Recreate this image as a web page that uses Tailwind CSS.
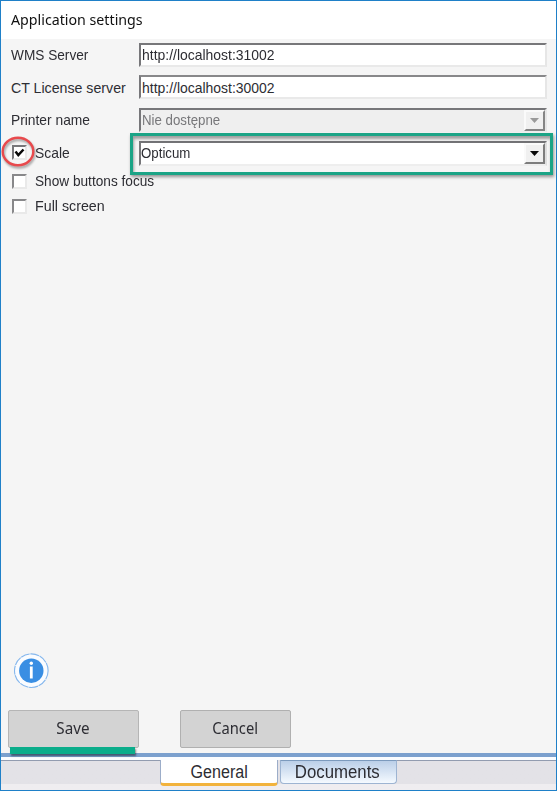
<!DOCTYPE html>
<html lang="en">
<head>
<meta charset="utf-8">
<title>Application settings</title>
<script src="https://cdn.jsdelivr.net/npm/@tailwindcss/browser@4"></script>
</head>
<body class="h-[791px] w-[557px] overflow-hidden font-['Liberation_Sans',Arial,sans-serif] text-[15px] text-[#2d2d33]">
<div class="relative flex h-full w-full flex-col border border-[#1f80c8] bg-[#f5f5f5]">
  <header class="flex h-[38px] shrink-0 items-center bg-white pl-[10px] font-['Noto_Sans','Open_Sans',sans-serif] text-[14.5px] text-[#111]"><span class="inline-block origin-left scale-x-[.98]">Application settings</span></header>

  <main class="flex grow flex-col">
    <div class="mt-[4px] flex h-[24px] items-center pl-[10px]">
      <label class="w-[128px] whitespace-nowrap"><span class="inline-block origin-left scale-x-[.91]">WMS Server</span></label>
      <div class="flex h-[24px] w-[408px] items-center border-2 border-t-[#77777a] border-l-[#77777a] border-r-[#e6e6e6] border-b-[#e9e9e9] bg-white pl-px"><span class="inline-block origin-left scale-x-[.93]">http://localhost:31002</span></div>
    </div>
    <div class="mt-[8px] flex h-[24px] items-center pl-[10px]">
      <label class="w-[128px] whitespace-nowrap"><span class="inline-block origin-left scale-x-[.945] translate-y-px">CT License server</span></label>
      <div class="flex h-[24px] w-[408px] items-center border-2 border-t-[#88888a] border-l-[#77777a] border-r-[#e6e6e6] border-b-[#e9e9e9] bg-white pl-px"><span class="inline-block origin-left scale-x-[.93] translate-y-px">http://localhost:30002</span></div>
    </div>
    <div class="mt-[9px] flex h-[24px] items-center pl-[10px]">
      <label class="w-[128px] whitespace-nowrap"><span class="inline-block origin-left scale-x-[.92]">Printer name</span></label>
      <div class="flex h-[24px] w-[408px] items-center justify-between border-2 border-t-[#77777a] border-l-[#77777a] border-r-[#e6e6e6] border-b-[#eeeeee] bg-[#efefef] pl-[1px] text-[#77777a]"><span class="inline-block origin-left scale-x-[.885]">Nie dostępne</span>
        <div class="flex h-[21px] w-[21px] items-center justify-center border-2 border-t-[#fafafa] border-l-[#fafafa] border-r-[#858585] border-b-[#858585] bg-[#f0f0f0]"><svg class="h-[5px] w-[9px]" viewBox="0 0 9 5"><path d="M0 0H9L4.5 5Z" fill="#9a9a9a"/></svg></div>
      </div>
    </div>
    <div class="mt-[9px] flex h-[25px] items-center pl-[11px]">
      <div class="flex h-[15px] w-[15px] shrink-0 -translate-y-px items-center justify-center border-2 border-t-[#77777a] border-l-[#77777a] border-r-[#e9e9e9] border-b-[#e9e9e9] bg-white"><svg class="h-[10px] w-[11px] shrink-0" viewBox="0 0 11 10"><path d="M1.5 3.5L4.3 7L9.5 1.5" fill="none" stroke="#080808" stroke-width="2.5"/></svg></div>
      <label class="ml-[8px] w-[104px]"><span class="inline-block origin-left scale-x-[.925]">Scale</span></label>
      <div class="flex h-[25px] w-[408px] items-center justify-between border-2 border-t-[#737376] border-l-[#77777a] border-r-[#dedede] border-b-[#eeeeee] bg-white"><span class="inline-block origin-left scale-x-[.885]">Opticum</span>
        <div class="flex h-[21px] w-[21px] items-center justify-center border-2 border-t-[#fafafa] border-l-[#fafafa] border-r-[#7d7d7d] border-b-[#7d7d7d] bg-[#f0f0f0]"><svg class="h-[5px] w-[9px]" viewBox="0 0 9 5"><path d="M0 0H9L4.5 5Z" fill="#080808"/></svg></div>
      </div>
    </div>
    <div class="mt-[7px] flex h-[16px] items-center pl-[11px]">
      <div class="h-[15px] w-[15px] border-2 border-t-[#88888a] border-l-[#88888a] border-r-[#e9e9e9] border-b-[#e9e9e9] bg-white"></div>
      <label class="ml-[8px]"><span class="inline-block origin-left scale-x-[.91]">Show buttons focus</span></label>
    </div>
    <div class="mt-[9px] flex h-[16px] items-center pl-[11px]">
      <div class="h-[15px] w-[15px] border-2 border-t-[#88888a] border-l-[#88888a] border-r-[#e9e9e9] border-b-[#e9e9e9] bg-white"></div>
      <label class="ml-[8px]"><span class="inline-block origin-left scale-x-[.95]">Full screen</span></label>
    </div>

    <div class="mt-auto pl-[12px]">
      <svg class="h-[36px] w-[36px]" viewBox="0 0 36 36"><circle cx="18.3" cy="17.7" r="16.8" fill="#fafcff" stroke="#85b7ed" stroke-width="1.1" stroke-dasharray="9 .7"/><circle cx="18.3" cy="17.7" r="12.2" fill="#398ee3"/><circle cx="18.3" cy="10.3" r="1.7" fill="#fff"/><path d="M16.9 13.5H19.7V25.5H16.9Z" fill="#fff"/></svg>
    </div>
    <div class="mt-[21px] mb-[5px] flex gap-[41px] pl-[7px] font-['Noto_Sans','Open_Sans',sans-serif] text-[15.5px]">
      <button class="flex h-[38px] w-[131px] items-center justify-center rounded-[2px] border border-[#b5b5b5] bg-[#d3d3d3] pr-[2px]"><span class="inline-block scale-x-[.98]">Save</span></button>
      <button class="flex h-[38px] w-[111px] items-center justify-center rounded-[2px] border border-[#b0b0b0] bg-[#d3d3d3]"><span class="inline-block scale-x-[.95]">Cancel</span></button>
    </div>
  </main>

  <footer class="flex h-[37px] shrink-0 flex-col">
    <div class="h-[4px] shrink-0 bg-[#7ba0ce]"></div>
    <div class="h-[3px] shrink-0 bg-[#fafcff]"></div>
    <nav class="flex h-[30px] items-start bg-gradient-to-b from-[#e3e2e7] from-80% to-[#efedf0] to-80% text-[17.5px]">
      <div class="h-px w-[159px] bg-[#929cb0]"></div>
      <div class="flex h-[26px] w-[118px] items-center justify-center rounded-b-[4px] border-x border-b-[3px] border-x-[#9cadc9] border-b-[#f2b33d] bg-white"><span class="inline-block scale-x-[.92] translate-y-px">General</span></div>
      <div class="ml-[2px] flex h-[24px] w-[117px] items-center justify-center rounded-b-[4px] border border-[#9db4d2] border-t-[#7c9abd] bg-gradient-to-b from-[#bbcfe8] to-[#f5faff] pr-[3px]"><span class="inline-block scale-x-[.96]">Documents</span></div>
      <div class="h-px grow bg-[#929cb0]"></div>
    </nav>
  </footer>

  <div class="pointer-events-none absolute top-[132px] left-[129px] h-[42px] w-[423px] border-[3px] border-[#1ba486] shadow-[1px_2px_3px_rgba(0,0,0,0.4),inset_1px_3px_3px_rgba(0,0,0,0.35)]"></div>
  <svg class="pointer-events-none absolute top-[134px] left-[0px] h-[36px] w-[38px] drop-shadow-[1px_2px_1px_rgba(0,0,0,0.35)]" viewBox="0 0 38 36"><ellipse cx="17" cy="16.5" rx="15.3" ry="13.8" fill="none" stroke="#e84a4d" stroke-width="2.4"/></svg>
  <div class="absolute top-[746px] left-[9px] h-[7px] w-[125px] bg-[#0bad8b] shadow-[1px_2px_2px_rgba(0,0,0,0.45)]"></div>
</div>
</body>
</html>
